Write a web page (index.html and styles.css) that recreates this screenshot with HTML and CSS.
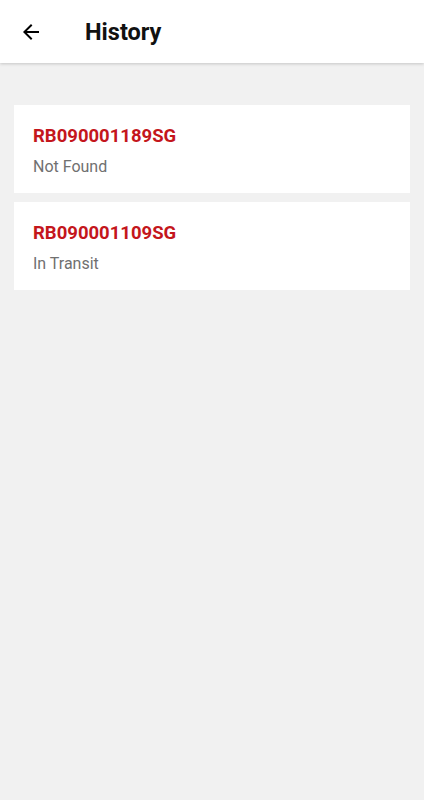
FILE: index.html
```html
<!DOCTYPE html>
<html>
<head>
    <title>History</title>
    <link rel="stylesheet" href="styles.css">
</head>
<body>
    <div class="toolbar">
        <button class="back" aria-label="Back">
            <svg width="24" height="24" viewBox="0 0 24 24">
                <path d="M20 11H7.83l5.59-5.59L12 4l-8 8 8 8 1.41-1.41L7.83 13H20v-2z" fill="#000"/>
            </svg>
        </button>
        <h1>History</h1>
    </div>

    <div class="list">
        <div class="item">
            <div class="number">RB090001189SG</div>
            <div class="status">Not Found</div>
        </div>
        <div class="item">
            <div class="number">RB090001109SG</div>
            <div class="status">In Transit</div>
        </div>
    </div>
</body>
</html>
```

FILE: styles.css
```css
body {
    margin: 0;
    font-family: Roboto, "Noto Sans", sans-serif;
    background-color: #f1f1f1;
    min-height: 800px;
}

.toolbar {
    display: flex;
    align-items: center;
    height: 63px;
    background-color: #fff;
    box-shadow: 0 1px 3px rgba(0, 0, 0, 0.18);
}

.back {
    display: flex;
    align-items: center;
    justify-content: center;
    width: 24px;
    height: 24px;
    margin-left: 19px;
    padding: 0;
    border: none;
    background: none;
}

.toolbar h1 {
    margin: 0 0 0 42px;
    font-size: 23.5px;
    font-weight: 700;
    color: #111;
}

.list {
    display: flex;
    flex-direction: column;
    gap: 9px;
    padding: 42px 14px 0;
}

.item {
    height: 88px;
    box-sizing: border-box;
    padding: 20px 19px 0;
    background-color: #fff;
}

.number {
    font-size: 18.5px;
    font-weight: 700;
    color: #c4161c;
    line-height: 22px;
}

.status {
    margin-top: 10px;
    font-size: 16px;
    color: #707070;
    line-height: 20px;
}
```
